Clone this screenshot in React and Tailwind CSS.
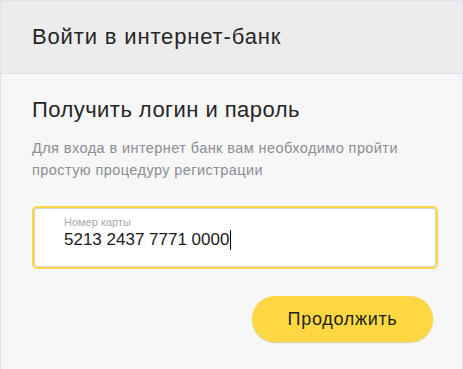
export default function App() {
  return (
    <div className="w-[463px] h-[369px] bg-[#f7f7f7] border-x border-t border-[#dde3ec] font-['Liberation_Sans',Arial,sans-serif] text-[#1f1f1f]">
      <div className="h-[73px] bg-[#ececec] border-b border-[#d9e0ea] flex items-center pl-[31px]">
        <h1 className="text-[22px] leading-7 tracking-[0.85px] text-[#262626]">Войти в интернет-банк</h1>
      </div>

      <div className="pl-[31px] pr-[24px] pt-[22px]">
        <h2 className="text-[22px] leading-7 tracking-[0.45px] text-[#262626]">Получить логин и пароль</h2>
        <p className="mt-[13px] text-[14.5px] leading-[22px] tracking-[0.42px] text-[#8b8e93]">
          Для входа в интернет банк вам необходимо пройти
          <br />
          простую процедуру регистрации
        </p>

        <div className="mt-[25px] h-[63px] rounded-[5px] border-2 border-[#fdd748] bg-white shadow-[inset_0_0_0_1px_#d4d4d4] pl-[30px] pt-[8px]">
          <div className="text-[11px] leading-[13px] text-[#a9a9a9]">Номер карты</div>
          <div className="flex items-center text-[17px] leading-[22px] text-[#1a1a1a]">
            <span>5213 2437 7771 0000</span>
            <span className="ml-px w-px h-[20px] bg-black" />
          </div>
        </div>

        <div className="flex justify-end mt-[27px] pr-[5px]">
          <button className="w-[181px] h-[46px] rounded-full bg-[#fed843] text-[18px] tracking-[0.7px] text-[#1f1f1f] shadow-[0_1px_1px_rgba(160,130,20,0.35)]">
            Продолжить
          </button>
        </div>
      </div>
    </div>
  );
}
